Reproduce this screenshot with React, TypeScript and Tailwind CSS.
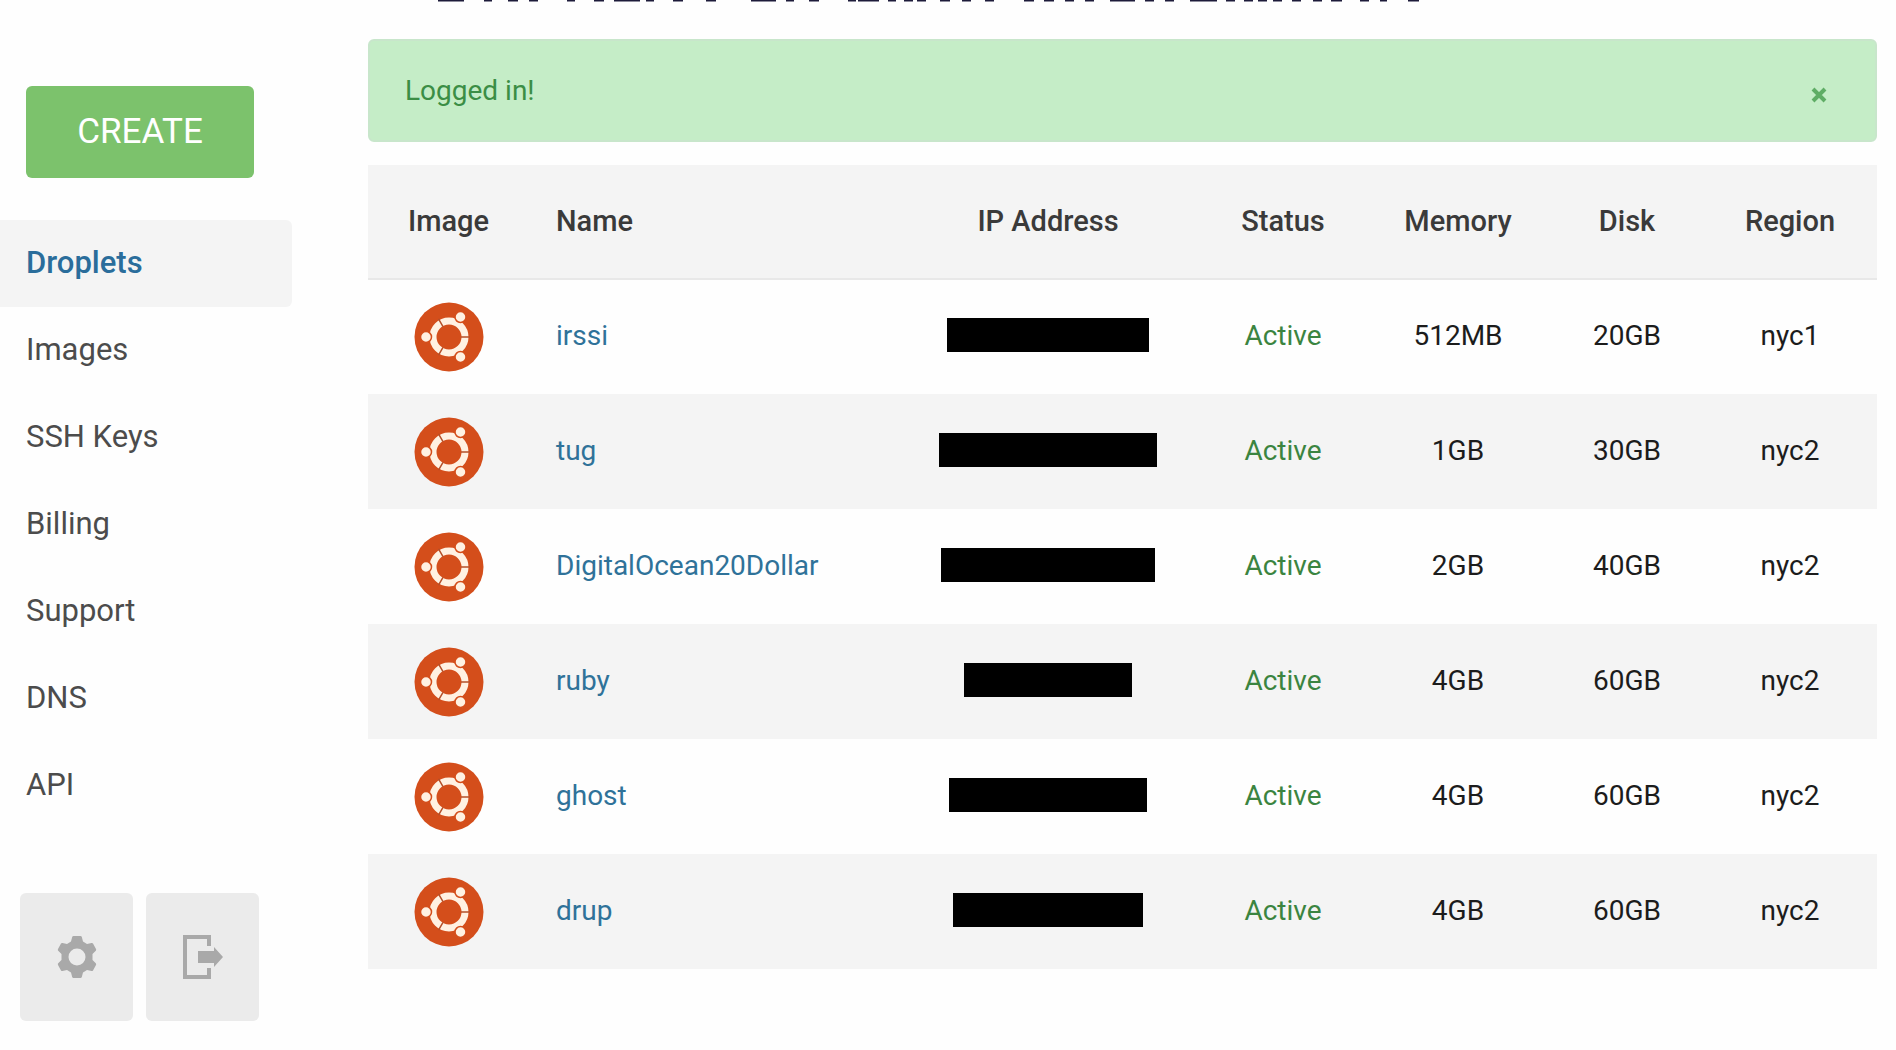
import React from 'react';

interface Droplet {
  name: string;
  ipWidth: string;
  status: string;
  memory: string;
  disk: string;
  region: string;
}

const droplets: Droplet[] = [
  { name: 'irssi', ipWidth: 'w-[202px]', status: 'Active', memory: '512MB', disk: '20GB', region: 'nyc1' },
  { name: 'tug', ipWidth: 'w-[218px]', status: 'Active', memory: '1GB', disk: '30GB', region: 'nyc2' },
  { name: 'DigitalOcean20Dollar', ipWidth: 'w-[214px]', status: 'Active', memory: '2GB', disk: '40GB', region: 'nyc2' },
  { name: 'ruby', ipWidth: 'w-[168px]', status: 'Active', memory: '4GB', disk: '60GB', region: 'nyc2' },
  { name: 'ghost', ipWidth: 'w-[198px]', status: 'Active', memory: '4GB', disk: '60GB', region: 'nyc2' },
  { name: 'drup', ipWidth: 'w-[190px]', status: 'Active', memory: '4GB', disk: '60GB', region: 'nyc2' },
];

const navItems = ['Droplets', 'Images', 'SSH Keys', 'Billing', 'Support', 'DNS', 'API'];

const UbuntuLogo: React.FC = () => (
  <svg className="mx-auto h-[70px] w-[70px]" viewBox="0 0 70 70" role="img" aria-label="Ubuntu">
    <circle cx="35" cy="35" r="34.5" fill="#d44e1b" />
    <circle cx="35" cy="35" r="16" fill="none" stroke="#fff1e2" strokeWidth="7" />
    {/* gaps in the ring */}
    <g stroke="#b5502a" strokeWidth="1.5">
      <path d="M47 35h9M29 24.600l-4.500-7.800M29 45.400l-4.500 7.800" />
    </g>
    {/* heads, each with a thin outline that bites into the ring */}
    <g fill="#fff1e2" stroke="#d44e1b" strokeWidth="1.5">
      <circle cx="12" cy="35" r="5.500" />
      <circle cx="46.500" cy="15" r="5.500" />
      <circle cx="46.500" cy="55" r="5.500" />
    </g>
  </svg>
);

const GearIcon: React.FC = () => (
  <svg className="h-[44px] w-[40px]" viewBox="0 0 40 44" fill="#a9a9a9" aria-hidden="true">
    <path
      fillRule="evenodd"
      d="M16.500 1h7q1 0 1.300 1l1.200 4.500 4 2.500 4.500-1q1-.3 1.500.6l3 5.400q.5 1-.2 1.700L35.500 19v6l3.300 3.300q.7.700.2 1.700l-3 5.400q-.5.900-1.500.6L30 35l-4 2.500-1.200 4.500q-.3 1-1.300 1h-7q-1 0-1.300-1L14 37.500 10 35l-4.500 1q-1 .3-1.500-.6L1 30q-.5-1 .2-1.700L4.500 25v-6l-3.300-3.300Q.5 15 1 14l3-5.400q.5-.9 1.500-.6L10 9l4-2.500L15.200 2q.3-1 1.300-1zM20 13.500a8.500 8.500 0 1 0 0 17 8.500 8.500 0 0 0 0-17z"
    />
  </svg>
);

const LogoutIcon: React.FC = () => (
  <svg className="h-[46px] w-[42px]" viewBox="0 0 42 46" aria-hidden="true">
    <path d="M27 12V3H3v40h24v-9" fill="none" stroke="#a9a9a9" strokeWidth="4" />
    <path d="M16 17h16v-4l9 10-9 10v-4H16z" fill="#a9a9a9" />
  </svg>
);

// lower edge of the banner lettering that is scrolled off the top
const bannerEdges = [
  [0, 26], [46, 8], [70, 10], [91, 9], [129, 8], [156, 10], [176, 26], [208, 8], [235, 10], [268, 10],
  [313, 25], [348, 8], [371, 10], [410, 8], [420, 21], [450, 8], [466, 9], [479, 9], [502, 10], [524, 9],
  [547, 9], [586, 10], [606, 10], [627, 9], [647, 9], [672, 25], [707, 9], [727, 9], [752, 27], [788, 9],
  [806, 9], [820, 9], [835, 9], [854, 9], [875, 9], [893, 11], [922, 9], [942, 7], [970, 11],
];

const BannerEdge: React.FC = () => (
  <svg className="mx-auto block h-[2px] w-[981px]" viewBox="0 0 981 2" aria-hidden="true">
    {bannerEdges.map(([x, width]) => (
      <rect key={x} x={x} width={width} height="1.500" fill="#1d1b3a" />
    ))}
  </svg>
);

const Sidebar: React.FC = () => (
  <aside className="w-[292px] shrink-0 pt-[84px]">
    <button className="ml-[26px] block h-[92px] w-[228px] rounded-md bg-[#7cc26c] text-[35px] text-white">
      CREATE
    </button>

    <nav className="mt-[42px]">
      {navItems.map(item => (
        <a
          key={item}
          href="#"
          className={
            item === 'Droplets'
              ? 'flex h-[87px] items-center rounded-r-md bg-[#f4f4f4] pl-[26px] text-[31px] font-medium text-[#2a6d9b]'
              : 'flex h-[87px] items-center pl-[26px] text-[31px] text-[#4c4c4c]'
          }
        >
          {item}
        </a>
      ))}
    </nav>

    <div className="mt-[64px] flex gap-[13px] pl-5">
      <button aria-label="Settings" className="flex h-32 w-[113px] items-center justify-center rounded-md bg-[#ebebeb]">
        <GearIcon />
      </button>
      <button aria-label="Log out" className="flex h-32 w-[113px] items-center justify-center rounded-md bg-[#ebebeb]">
        <LogoutIcon />
      </button>
    </div>
  </aside>
);

const DropletTable: React.FC = () => (
  <table className="mt-[23px] w-full table-fixed text-center text-[28px]">
    <colgroup>
      <col className="w-[161px]" />
      <col />
      <col className="w-[306px]" />
      <col className="w-[164px]" />
      <col className="w-[186px]" />
      <col className="w-[152px]" />
      <col className="w-[174px]" />
    </colgroup>
    <thead className="bg-[#f4f4f4] text-[29px] text-[#3a3a3a]">
      <tr className="h-[114px] border-b-2 border-[#e8e8e8]">
        <th className="font-medium">Image</th>
        <th className="pl-[27px] text-left font-medium">Name</th>
        <th className="font-medium">IP Address</th>
        <th className="font-medium">Status</th>
        <th className="font-medium">Memory</th>
        <th className="font-medium">Disk</th>
        <th className="font-medium">Region</th>
      </tr>
    </thead>
    <tbody className="text-[#1c1c1c]">
      {droplets.map(droplet => (
        <tr key={droplet.name} className="h-[115px] even:bg-[#f4f4f4]">
          <td><UbuntuLogo /></td>
          <td className="pb-0.5 pl-[27px] text-left">
            <a href="#" className="text-[#2f7299]">{droplet.name}</a>
          </td>
          <td className="pb-1"><div className={`mx-auto h-[34px] bg-black ${droplet.ipWidth}`} /></td>
          <td className="pb-0.5 text-[#3b8440]">{droplet.status}</td>
          <td className="pb-0.5">{droplet.memory}</td>
          <td className="pb-0.5">{droplet.disk}</td>
          <td className="pb-0.5">{droplet.region}</td>
        </tr>
      ))}
    </tbody>
  </table>
);

const App: React.FC = () => {
  return (
    <div className="min-h-screen bg-[#fefefe] font-[Roboto,'Liberation_Sans',sans-serif]">
      <header className="pr-[39px]">
        <BannerEdge />
      </header>
      <div className="flex">
        <Sidebar />
        <main className="ml-[76px] min-w-0 flex-1 pt-[37px] pr-[19px]">
          <div className="flex h-[103px] items-center justify-between rounded-md border-2 border-[#c8e6cb] bg-[#c5edc7] pr-[48px] pl-[35px]">
            <p className="text-[28px] text-[#3b8e45]">Logged in!</p>
            <button aria-label="Close" className="pt-2 text-[#5fad65]">
              <svg className="h-4 w-4" viewBox="0 0 16 16" aria-hidden="true">
                <path d="M2 2l12 12M14 2L2 14" stroke="currentColor" strokeWidth="4" />
              </svg>
            </button>
          </div>
          <DropletTable />
        </main>
      </div>
    </div>
  );
};

export default App;
